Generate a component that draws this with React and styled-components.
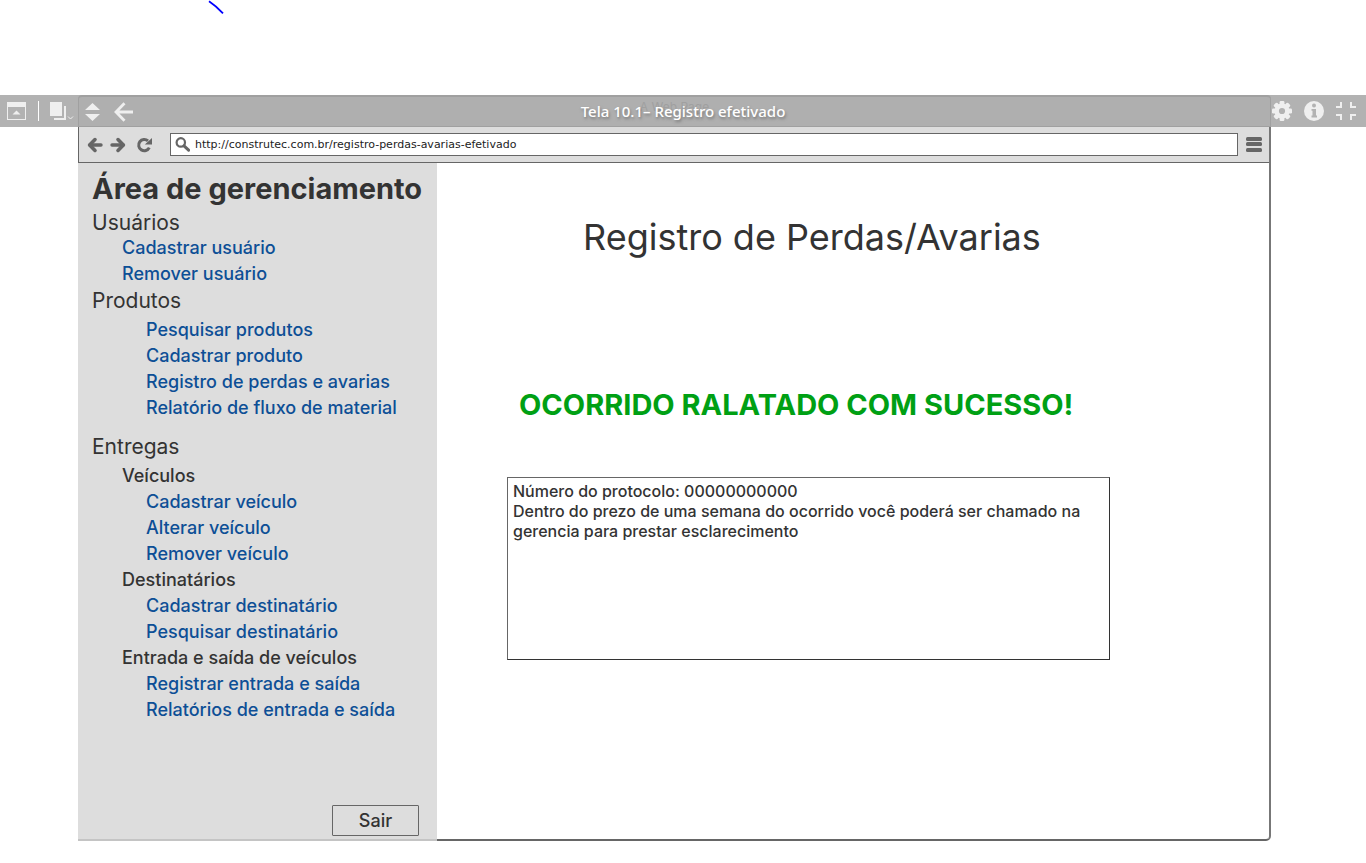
import React from 'react';
import styled, { createGlobalStyle } from 'styled-components';

const GlobalStyle = createGlobalStyle`
  *, *::before, *::after { box-sizing: border-box; }
  body {
    margin: 0;
    background: #fff;
    color: #333;
    font-family: Inter, "Liberation Sans", sans-serif;
  }
  h1, h2, h3, ul { margin: 0; padding: 0; font-weight: 400; }
  svg { display: block; flex: none; }
`;

const Top = styled.div`
  height: 95px;
  padding-left: 208px;
`;

const Bar = styled.header`
  position: relative;
  display: flex;
  height: 32px;
  background: #b2b2b2;
`;

const BarSide = styled.div`
  display: flex;
  align-items: center;
  flex: none;
  width: ${(p) => p.$width};
  padding-left: ${(p) => p.$inset};
  gap: ${(p) => p.$gap};
`;

const IconButton = styled.button`
  display: flex;
  padding: 0;
  border: 0;
  background: none;
  color: ${(p) => p.$color || '#efefef'};
  cursor: pointer;
`;

const Divider = styled.span`
  width: 1px;
  height: 20px;
  background: #fff;
`;

const WindowTitle = styled.div`
  display: flex;
  align-items: center;
  flex: 1;
  gap: 14px;
  padding-left: 6px;
  border: 1px solid #a0a0a0;
  border-top-width: 2px;
  border-radius: 4px 4px 0 0;
  background: #afafaf;
`;

const Centered = styled.span`
  position: absolute;
  inset: 0 ${(p) => p.$right} 0 ${(p) => p.$left};
  text-align: center;
  pointer-events: none;
`;

const PageName = styled(Centered)`
  color: #a0a0a0;
  font-size: 12px;
  line-height: 24px;
`;

const ScreenName = styled(Centered)`
  color: #fff;
  font-family: "Noto Sans", sans-serif;
  font-size: 15px;
  font-weight: 500;
  line-height: 32px;
  text-shadow: 1px 2px 3px #777;
`;

const Browser = styled.div`
  margin: 0 95px 0 78px;
  border-right: 2px solid #777;
  border-bottom: 2px solid #666;
  border-radius: 0 0 5px 0;
`;

const Toolbar = styled.div`
  display: flex;
  align-items: center;
  height: 36px;
  padding: 0 7px 0 8px;
  border-left: 1px solid #666;
  border-bottom: 1px solid #666;
  background: #ddd;
`;

const NavButtons = styled.div`
  display: flex;
  gap: 7px;
  margin-right: 15px;
`;

const AddressBox = styled.label`
  display: flex;
  align-items: center;
  flex: 1;
  gap: 5px;
  height: 23px;
  margin-right: 8px;
  padding-left: 4px;
  border: 1px solid #666;
  background: #fff;
`;

const Address = styled.input`
  flex: 1;
  min-width: 0;
  padding: 0;
  border: 0;
  outline: 0;
  background: none;
  color: #222;
  font: 11px/20px "DejaVu Sans", sans-serif;
`;

const Body = styled.div`
  display: flex;
  min-height: 676px;
`;

const Sidebar = styled.nav`
  display: flex;
  flex-direction: column;
  flex: none;
  width: 359px;
  padding: 8px 18px 3px 14px;
  background: #ddd;
  box-shadow: 0 2px 0 #c4c4c4;
`;

const SidebarTitle = styled.h1`
  font-size: 29px;
  line-height: 36px;
  font-weight: 700;
  white-space: nowrap;
`;

const Section = styled.h2`
  margin-top: ${(p) => p.$before};
  margin-bottom: ${(p) => p.$after || '0'};
  font-size: 21px;
  line-height: 24px;
`;

const Group = styled.h3`
  padding-left: 30px;
  font-size: 18px;
  font-weight: 500;
  line-height: 26px;
`;

const Links = styled.ul`
  padding-left: ${(p) => (p.$nested ? '54px' : '30px')};
  list-style: none;
  font-size: 18px;
  font-weight: 500;
  line-height: 26px;
  white-space: nowrap;
`;

const Link = styled.a`
  color: #0d4f96;
  text-decoration: none;
`;

const Exit = styled.button`
  align-self: flex-end;
  width: 87px;
  height: 31px;
  margin-top: auto;
  padding: 0;
  border: 1px solid #666;
  border-radius: 1px;
  background: #ddd;
  color: #333;
  font: 500 18px/26px Inter, sans-serif;
`;

const Main = styled.main`
  flex: 1;
  min-width: 0;
  padding: 52px 32px 32px 70px;
`;

const Heading = styled.h1`
  margin-left: 76px;
  font-size: 36px;
  line-height: 44px;
`;

const Success = styled.h2`
  margin: 128px 0 54px 12px;
  color: #00a014;
  font-size: 29px;
  line-height: 36px;
  font-weight: 700;
`;

const Message = styled.textarea`
  display: block;
  width: 100%;
  max-width: 603px;
  height: 183px;
  padding: 3px 5px;
  border: 1px solid #333;
  border-top-color: #666;
  border-left-color: #666;
  border-radius: 0;
  outline: 0;
  resize: none;
  background: #fff;
  color: #333;
  font: 500 16px/20px Inter, sans-serif;
`;

const LinkList = ({ items, nested }) => (
  <Links $nested={nested}>
    {items.map((item) => (
      <li key={item}><Link href="#">{item}</Link></li>
    ))}
  </Links>
);

const Arrow = ({ flip }) => (
  <svg width="16" height="16" viewBox="0 0 16 16" fill="none" stroke="currentColor" strokeWidth="4">
    <g transform={flip ? 'matrix(-1 0 0 1 16 0)' : undefined}>
      <path d="M3 8H14" strokeLinecap="round" strokeWidth="3.4" />
      <path d="M8 2.6 2.6 8 8 13.4" strokeLinecap="round" strokeLinejoin="round" strokeWidth="3.6" />
    </g>
  </svg>
);

const teeth = [0, 45, 90, 135, 180, 225, 270, 315];

export default function App() {
  return (
    <>
      <GlobalStyle />
      <Top>
        <svg width="16" height="15" viewBox="0 0 16 15" fill="none" stroke="#00f" strokeWidth="1.8">
          <path d="M1 1.2C6 4.5 10 8 15 13.4" />
        </svg>
      </Top>

      <Bar>
        <BarSide $width="78px" $inset="7px" $gap="11px">
          <IconButton aria-label="Painel">
            <svg width="20" height="18" viewBox="0 0 20 18" fill="currentColor">
              <path d="M0 0H19V18H0ZM1 5V17H18V5Z" fillRule="evenodd" />
              <path d="M5.5 12.5 9.5 8.5l4 4Z" />
            </svg>
          </IconButton>
          <Divider />
          <IconButton aria-label="Telas">
            <svg width="24" height="18" viewBox="1 0 24 18" fill="currentColor">
              <path d="M0 0H12V14H0ZM14 4h2V18H4V16H14Z" transform="translate(1 0)" />
              <path d="m19 14.5 2.5 2.5 2.5-2.5" fill="none" stroke="currentColor" />
            </svg>
          </IconButton>
        </BarSide>
        <WindowTitle>
          <IconButton aria-label="Ordenar">
            <svg width="15" height="18" viewBox="0 0 15 18" fill="currentColor">
              <path d="M0 7 7.5 0 15 7ZM0 11H15L7.5 18Z" />
            </svg>
          </IconButton>
          <IconButton aria-label="Voltar à tela anterior">
            <svg width="20" height="20" viewBox="0 0 20 20" fill="none" stroke="currentColor" strokeWidth="2.8">
              <path d="M2 10H19M10.5 1.2 2 10l8.5 8.8" />
            </svg>
          </IconButton>
        </WindowTitle>
        <BarSide $width="95px" $inset="1px" $gap="12px">
          <IconButton aria-label="Configurações">
            <svg width="20" height="20" viewBox="0 0 20 20">
              <g fill="currentColor">
                {teeth.map((a) => (
                  <rect key={a} x="7.6" y="0" width="4.8" height="5" rx="1.2" transform={`rotate(${a} 10 10)`} />
                ))}
              </g>
              <circle cx="10" cy="10" r="5.3" fill="none" stroke="currentColor" strokeWidth="4.4" />
            </svg>
          </IconButton>
          <IconButton aria-label="Informações">
            <svg width="20" height="20" viewBox="0 0 20 20">
              <circle cx="10" cy="10" r="10" fill="currentColor" />
              <circle cx="10" cy="4.6" r="2" fill="#b2b2b2" />
              <path d="M7.5 8H12V14.5H13V16.4H7.5V14.5H8.5V9.8H7.5Z" fill="#b2b2b2" />
            </svg>
          </IconButton>
          <IconButton aria-label="Sair da tela cheia">
            <svg width="20" height="18" viewBox="0 0 20 18" fill="none" stroke="currentColor" strokeWidth="2">
              <path d="M0 5H5V0M20 5H15V0M0 13H5V18M20 13H15V18" />
            </svg>
          </IconButton>
        </BarSide>
        <PageName $left="78px" $right="95px">A Web Page</PageName>
        <ScreenName $left="0" $right="0">Tela 10.1– Registro efetivado</ScreenName>
      </Bar>

      <Browser>
        <Toolbar>
          <NavButtons>
            <IconButton $color="#666" aria-label="Voltar"><Arrow /></IconButton>
            <IconButton $color="#666" aria-label="Avançar"><Arrow flip /></IconButton>
            <IconButton $color="#666" aria-label="Recarregar">
              <svg width="22" height="16" viewBox="-2 0 22 16">
                <path d="M14.3 10.6A5.6 5.6 0 1 1 13 3.9" fill="none" stroke="currentColor" strokeWidth="3" />
                <path d="M17 1V7.5H9.8Z" fill="currentColor" />
              </svg>
            </IconButton>
          </NavButtons>
          <AddressBox>
            <svg width="15" height="15" viewBox="0 0 15 15" fill="none" stroke="#666">
              <circle cx="5.8" cy="5.4" r="4.2" strokeWidth="2.2" />
              <path d="m9 8.8 4.6 4.4" strokeWidth="3" strokeLinecap="round" />
            </svg>
            <Address
              aria-label="Endereço"
              readOnly
              value="http://construtec.com.br/registro-perdas-avarias-efetivado"
            />
          </AddressBox>
          <IconButton $color="#666" aria-label="Menu">
            <svg width="16" height="16" viewBox="0 0 16 16" fill="currentColor">
              <rect y="0" width="16" height="4" rx="1.5" />
              <rect y="5" width="16" height="4" rx="1.5" />
              <rect y="11" width="16" height="4" rx="1.5" />
            </svg>
          </IconButton>
        </Toolbar>

        <Body>
          <Sidebar>
            <SidebarTitle>Área de gerenciamento</SidebarTitle>
            <Section $before="4px">Usuários</Section>
            <LinkList items={['Cadastrar usuário', 'Remover usuário']} />
            <Section $before="2px" $after="4px">Produtos</Section>
            <LinkList
              nested
              items={[
                'Pesquisar produtos',
                'Cadastrar produto',
                'Registro de perdas e avarias',
                'Relatório de fluxo de material',
              ]}
            />
            <Section $before="14px" $after="4px">Entregas</Section>
            <Group>Veículos</Group>
            <LinkList nested items={['Cadastrar veículo', 'Alterar veículo', 'Remover veículo']} />
            <Group>Destinatários</Group>
            <LinkList nested items={['Cadastrar destinatário', 'Pesquisar destinatário']} />
            <Group>Entrada e saída de veículos</Group>
            <LinkList nested items={['Registrar entrada e saída', 'Relatórios de entrada e saída']} />
            <Exit>Sair</Exit>
          </Sidebar>

          <Main>
            <Heading>Registro de Perdas/Avarias</Heading>
            <Success>OCORRIDO RALATADO COM SUCESSO!</Success>
            <Message
              aria-label="Mensagem"
              readOnly
              value={
                'Número do protocolo: 00000000000\nDentro do prezo de uma semana do ocorrido você poderá ser chamado na gerencia para prestar esclarecimento'
              }
            />
          </Main>
        </Body>
      </Browser>
    </>
  );
}
